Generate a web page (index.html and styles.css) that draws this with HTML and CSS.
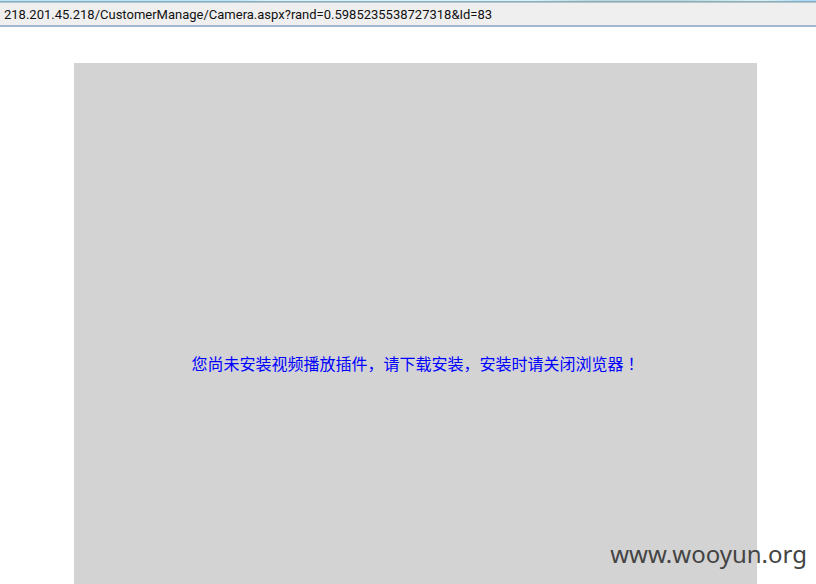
FILE: index.html
```html
<!DOCTYPE html>
<html lang="zh-CN">
<head>
<meta charset="utf-8">
<title>Camera</title>
<link rel="stylesheet" href="styles.css">
</head>
<body>
<header class="address-bar">
  <input class="address" type="text" aria-label="Address" value="218.201.45.218/CustomerManage/Camera.aspx?rand=0.5985235538727318&amp;Id=83">
</header>
<main class="page">
  <section class="player">
    <a class="notice" href="#">您尚未安装视频播放插件，请下载安装，安装时请关闭浏览器<span class="mark" lang="zh-TW">！</span></a>
  </section>
</main>
<div class="watermark">www.wooyun.org</div>
</body>
</html>
```

FILE: styles.css
```css
* {
  box-sizing: border-box;
}

body {
  margin: 0;
  height: 100vh;
  display: flex;
  flex-direction: column;
  overflow: hidden;
  background: #fff;
  font-family: "Noto Sans", "Noto Sans CJK SC", sans-serif;
}

.address-bar {
  display: flex;
  flex-direction: column;
  background: #efefef;
  border-bottom: 2px solid #a3b8cf;
}

.address-bar::before {
  content: "";
  height: 3px;
  background:
    linear-gradient(#8fabbd 0 1px, #b0c7ce 1px) 0 1px / 100% 2px no-repeat,
    linear-gradient(90deg, #b5e5f8 0 28%, #d5f3f8 32% 66%, #b9d9d8 72% 84%, #d9f1ee 92% 94%, #a8dcf8 98%);
}

.address {
  width: 100%;
  height: 22px;
  padding: 0 4px;
  border: 0;
  outline: 0;
  background: transparent;
  color: #111;
  font: 13px Roboto, sans-serif;
}

.page {
  flex: 1;
  display: flex;
  padding: 36px 59px 0 74px;
}

.player {
  flex: 1;
  padding-top: 288px;
  background: #d3d3d3;
  text-align: center;
}

.notice {
  color: #00f;
  font-size: 16px;
  line-height: 24px;
  font-family: "Noto Sans CJK SC", sans-serif;
  text-decoration: none;
}

.mark {
  font-family: "Noto Sans CJK TC", sans-serif;
}

.watermark {
  position: absolute;
  right: 9px;
  bottom: 14px;
  color: #444;
  font-size: 24px;
  line-height: 32px;
}
```
